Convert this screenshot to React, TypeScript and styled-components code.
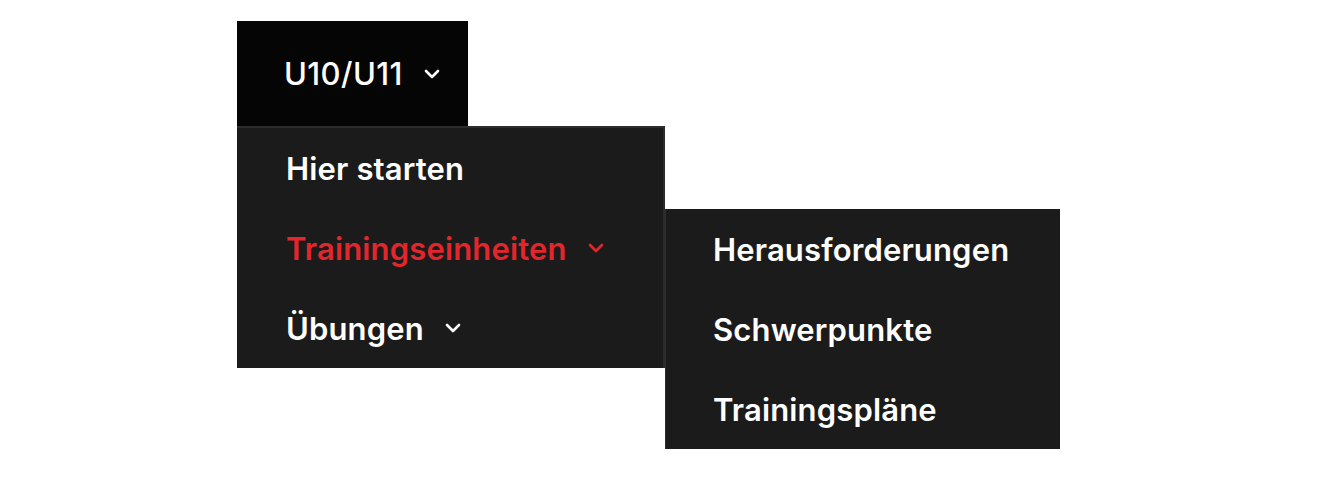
import React from "react";
import styled, { createGlobalStyle } from "styled-components";

const GlobalStyle = createGlobalStyle`
  html, body {
    margin: 0;
    padding: 0;
    background: #ffffff;
    font-family: Inter, "Noto Sans", Arial, sans-serif;
    -webkit-font-smoothing: antialiased;
  }
`;

const Nav = styled.nav`
  display: flex;
  flex-direction: column;
  align-items: flex-start;
  padding: 21px 0 0 237px;
`;

const Toggle = styled.button`
  display: flex;
  align-items: center;
  gap: 21px;
  box-sizing: border-box;
  width: 231px;
  height: 105px;
  padding: 0 0 0 47px;
  border: none;
  background: #050505;
  color: #ffffff;
  font-family: inherit;
  font-size: 31px;
  font-weight: 500;
  letter-spacing: 0.4px;
  cursor: pointer;
`;

const Flyouts = styled.div`
  display: flex;
  align-items: flex-start;
`;

const Panel = styled.ul<{ $offset?: number; $width: number; $edge: "main" | "sub" }>`
  list-style: none;
  margin: ${(p) => p.$offset ?? 0}px 0 0 0;
  padding: 0;
  box-sizing: border-box;
  width: ${(p) => p.$width}px;
  background: #1b1b1b;
  ${(p) =>
    p.$edge === "main"
      ? `border-top: 2px solid #2c2c2c; border-right: 2px solid #2c2c2c;`
      : `border-left: 1px solid #2c2c2c;`}
`;

const Item = styled.li<{ $active?: boolean; $inset: number }>`
  display: flex;
  align-items: center;
  gap: 21px;
  height: 80px;
  padding-left: ${(p) => p.$inset}px;
  color: ${(p) => (p.$active ? "#e3262b" : "#ffffff")};
  font-size: 31px;
  font-weight: 600;
  letter-spacing: 0.15px;
  white-space: nowrap;
  cursor: pointer;
`;

const Chevron = () => (
  <svg width="16" height="10" viewBox="0 0 16 10" fill="none" aria-hidden="true">
    <path
      d="M2 2 L8 8 L14 2"
      stroke="currentColor"
      strokeWidth="2.6"
      strokeLinecap="round"
      strokeLinejoin="round"
    />
  </svg>
);

const mainItems = [
  { label: "Hier starten", sub: false, active: false },
  { label: "Trainingseinheiten", sub: true, active: true },
  { label: "Übungen", sub: true, active: false },
];

const subItems = ["Herausforderungen", "Schwerpunkte", "Trainingspläne"];

export default function App() {
  return (
    <>
      <GlobalStyle />
      <Nav>
        <Toggle type="button">
          U10/U11
          <Chevron />
        </Toggle>
        <Flyouts>
          <Panel $width={428} $edge="main">
            {mainItems.map((it) => (
              <Item key={it.label} $inset={49} $active={it.active}>
                {it.label}
                {it.sub && <Chevron />}
              </Item>
            ))}
          </Panel>
          <Panel $width={395} $edge="sub" $offset={83}>
            {subItems.map((s) => (
              <Item key={s} $inset={47}>
                {s}
              </Item>
            ))}
          </Panel>
        </Flyouts>
      </Nav>
    </>
  );
}
